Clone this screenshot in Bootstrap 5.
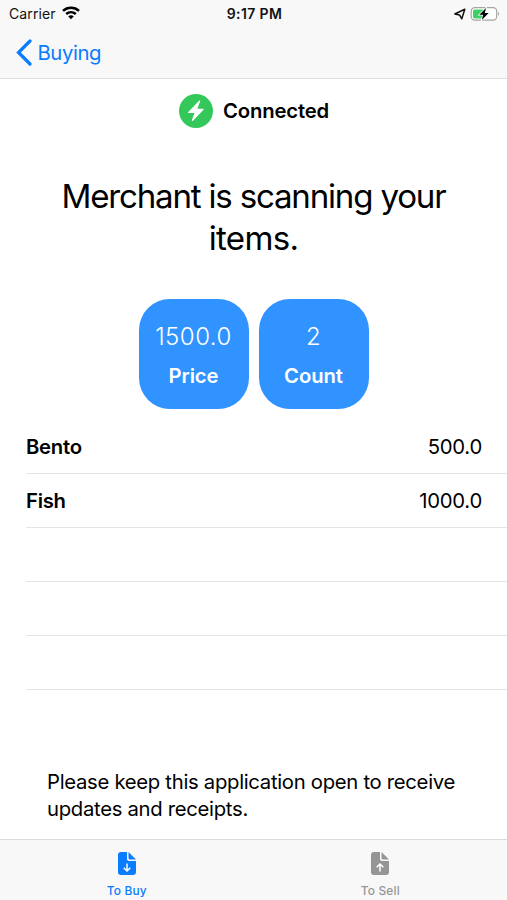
<!DOCTYPE html>
<html lang="en">
<head>
<meta charset="utf-8">
<meta name="viewport" content="width=device-width, initial-scale=1">
<title>Buying</title>
<link href="https://cdn.jsdelivr.net/npm/bootstrap@5.3.0/dist/css/bootstrap.min.css" rel="stylesheet">
<style>
body{font-family:Inter,"Liberation Sans",sans-serif;color:#000;background:#fff;overflow:hidden}
.screen{height:900px;width:507px}
.top-bar{height:79px;background:#f8f8f8;border-bottom:1px solid #dedede}
.status-bar{height:27px;padding:0 7px 0 9px;font-size:14px;line-height:27px;color:#111}
.status-side{width:160px}
.carrier{letter-spacing:.1px}
.wifi{margin-left:-2px;margin-top:-2px}
.clock{font-size:14px;letter-spacing:.4px}
.back-link{color:#0a7cff;font-size:20.3px;height:50px;padding-left:16px;letter-spacing:-.4px}
.back-link span{padding-top:2px;margin-left:-.5px}
.connection{height:64px;font-size:20.3px;letter-spacing:-.15px;gap:10px;padding-left:1px}
.connection span{padding-top:1px}
.headline{font-size:33.1px;line-height:41.5px;letter-spacing:-1.2px;padding-top:33px;height:156px}
.headline-end{letter-spacing:-.7px}
.tiles{gap:10px}
.tile{width:110px;height:110px;border-radius:31px;background:#3093ff}
.tile-value{font-size:24px;line-height:30px;margin-top:2px;font-weight:300;letter-spacing:.5px}
.tile-name{font-size:20.3px;line-height:26px;margin-top:11px;letter-spacing:-.1px}
.items{margin-left:26px;padding-top:10px}
.item{height:54.2px;border-bottom:1px solid #e4e4e6;padding:1px 25px 0 0;font-size:20.3px;letter-spacing:-.25px}
.item:first-child{height:54.7px;padding-top:2px}
.notice{padding:79px 0 0 47px;font-size:20.3px;line-height:26.8px;letter-spacing:-.3px}
.tab-bar{height:61px;background:#f8f8f8;border-top:1px solid #dadada}
.tab{padding-top:12px;font-size:11.9px;line-height:16px;color:#959595;text-decoration:none}
.tab.active{color:#0a7cff}
.tab span{margin-top:8px;letter-spacing:.2px}
</style>
<script src="https://cdn.jsdelivr.net/npm/bootstrap@5.3.0/dist/js/bootstrap.bundle.min.js"></script>
</head>
<body>
<div class="screen d-flex flex-column">
  <header class="top-bar flex-shrink-0">
    <div class="status-bar d-flex justify-content-between">
      <div class="status-side d-flex align-items-center gap-2">
        <span class="carrier text-nowrap">Carrier</span>
        <svg class="wifi" width="18" height="14" viewBox="0 0 18 14" fill="none" stroke="#000" stroke-width="2.5"><path d="M1 4.800C5.500.6 12.500.6 17 4.800"/><path d="M4.200 8C7 5.500 11 5.500 13.800 8"/><path d="M6.200 10.300Q9 8.300 11.800 10.300L9 13.200Z" fill="#000" stroke="none"/></svg>
      </div>
      <div class="clock fw-semibold text-nowrap">9:17 PM</div>
      <div class="status-side d-flex align-items-center justify-content-end">
        <svg width="48" height="18" viewBox="0 0 48 18"><path d="M2.800 9 12.800 4.200 9.800 13.800 7.500 9.900Z" fill="none" stroke="#111" stroke-width="1.500" stroke-linejoin="round"/><rect x="19.200" y="2.600" width="25.500" height="12.600" rx="3.600" fill="#fff" stroke="#a5a5a5" stroke-width="1.200"/><path d="M22.700 4.400H31V13.400H22.700Q21 13.400 21 11.800V6Q21 4.400 22.700 4.400Z" fill="#3bd164"/><path d="M46 6.800Q48 8.800 46 11Z" fill="#a5a5a5"/><path d="M34 3 27.300 9.800H31.100L29.800 15 36.700 8.100H32.800Z" fill="#000" stroke="#fff" stroke-width="1.500" paint-order="stroke"/></svg>
      </div>
    </div>
    <a class="back-link d-flex align-items-center text-decoration-none" href="#">
      <svg width="22" height="28" viewBox="0 0 22 28" fill="none" stroke="#0a7cff" stroke-width="3.200"><path d="M14 3 2.500 14.500 14 26" stroke-linecap="round" stroke-linejoin="miter"/></svg>
      <span>Buying</span>
    </a>
  </header>
  <main class="flex-grow-1">
    <div class="connection d-flex align-items-center justify-content-center fw-semibold">
      <svg width="34" height="34" viewBox="0 0 34 34"><circle cx="17" cy="17" r="17" fill="#34c759"/><path d="M20.300 6.500 9 18.200Q8.700 19 9.500 19H15.500L12.800 26.200Q13 27.500 14 26.700L24.500 15.700Q25 14.700 24 14.700H18.300L21.200 7.200Q21.300 6 20.300 6.500Z" fill="#fff"/></svg>
      <span>Connected</span>
    </div>
    <h1 class="headline fw-normal text-center m-0">Merchant is scanning your<br><span class="headline-end">items.</span></h1>
    <div class="tiles d-flex justify-content-center text-white">
      <div class="tile d-flex flex-column align-items-center justify-content-center"><span class="tile-value">1500.0</span><span class="tile-name fw-semibold">Price</span></div>
      <div class="tile d-flex flex-column align-items-center justify-content-center"><span class="tile-value">2</span><span class="tile-name fw-semibold">Count</span></div>
    </div>
    <div class="items">
      <div class="item d-flex align-items-center justify-content-between"><span class="fw-semibold">Bento</span><span>500.0</span></div>
      <div class="item d-flex align-items-center justify-content-between"><span class="fw-semibold">Fish</span><span>1000.0</span></div>
      <div class="item"></div>
      <div class="item"></div>
      <div class="item"></div>
    </div>
    <p class="notice m-0 text-nowrap">Please keep this application open to receive<br>updates and receipts.</p>
  </main>
  <nav class="tab-bar row g-0 flex-shrink-0">
    <a class="tab active col d-flex flex-column align-items-center fw-medium" href="#">
      <svg width="18" height="23" viewBox="0 0 18 23"><path d="M3 0H9V7Q9 9 11 9H18V20Q18 23 15 23H3Q0 23 0 20V3Q0 0 3 0Z" fill="currentColor"/><path d="M10.500 0 18 7.500H12Q10.500 7.500 10.500 6Z" fill="currentColor"/><path d="M9 11.500V18.500M5.700 15.700 9 19 12.300 15.700" fill="none" stroke="#fff" stroke-width="1.500"/></svg>
      <span>To Buy</span>
    </a>
    <a class="tab col d-flex flex-column align-items-center fw-medium" href="#">
      <svg width="18" height="23" viewBox="0 0 18 23"><path d="M3 0H9V7Q9 9 11 9H18V20Q18 23 15 23H3Q0 23 0 20V3Q0 0 3 0Z" fill="currentColor"/><path d="M10.500 0 18 7.500H12Q10.500 7.500 10.500 6Z" fill="currentColor"/><path d="M9 19.500V12.500M5.700 15.300 9 12 12.300 15.300" fill="none" stroke="#fff" stroke-width="1.500"/></svg>
      <span>To Sell</span>
    </a>
  </nav>
</div>
</body>
</html>
